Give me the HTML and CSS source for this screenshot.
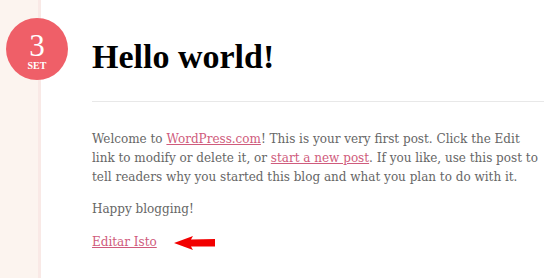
FILE: index.html
```html
<!DOCTYPE html>
<html lang="en">
<head>
  <meta charset="UTF-8"/>
  <title>Hello world!</title>
  <link rel="stylesheet" href="styles.css">
</head>
<body>

  <!-- Post -->
  <div class="post">
    <div class="date-badge">
      <span class="day">3</span>
      <span class="month">SET</span>
    </div>

    <div class="entry">
      <h1 class="entry-title">Hello world!</h1>

      <div class="entry-content">
        <p>Welcome to <a href="#">WordPress.com</a>! This is your very first post. Click the Edit link to modify or delete it, or <a href="#">start a new post</a>. If you like, use this post to tell readers why you started this blog and what you plan to do with it.</p>
        <p>Happy blogging!</p>
        <p class="edit-link">
          <a href="#">Editar Isto</a>
          <svg class="arrow" width="42" height="14" viewBox="0 0 42 14">
            <polygon points="0,7 19,0 17,3.5 41,3 41,10.5 17,10.5 19,14" fill="#f20000"/>
          </svg>
        </p>
      </div>
    </div>
  </div>

</body>
</html>
```
FILE: styles.css
```css
body {
  margin: 0;
  background-color: #ffffff;
  background-image: linear-gradient(to right, #fcf4ef 0, #fcf4ef 38px, #f9e9e6 38px, #f9e9e6 41px, #ffffff 41px);
  font-family: "DejaVu Serif", serif;
  height: 278px;
  overflow: hidden;
}

.post {
  display: flex;
  align-items: flex-start;
}

.date-badge {
  flex: none;
  width: 62px;
  height: 62px;
  margin: 18px 0 0 6px;
  border-radius: 50%;
  background-color: #ef5f68;
  color: #ffffff;
  font-family: "Liberation Serif", serif;
  display: flex;
  flex-direction: column;
  align-items: center;
  line-height: 1;
}

.date-badge .day {
  font-size: 31px;
  margin-top: 12px;
}

.date-badge .month {
  font-size: 10px;
  font-weight: bold;
  margin-top: 0;
}

.entry {
  flex: 1;
  margin-left: 24px;
}

.entry-title {
  font-family: "Liberation Serif", serif;
  font-size: 34px;
  font-weight: bold;
  color: #000000;
  margin: 0;
  padding: 37px 0 24px;
  line-height: 40px;
  border-bottom: 1px solid #e8e8e8;
}

.entry-content {
  padding: 28px 4px 0 0;
  font-size: 12px;
  line-height: 19px;
  color: #666666;
}

.entry-content p {
  margin: 0 0 13px;
}

.entry-content .edit-link {
  margin-top: 14px;
}

.entry-content a {
  color: #cf5b7c;
}

.edit-link {
  display: flex;
  align-items: center;
  gap: 17px;
}
```
